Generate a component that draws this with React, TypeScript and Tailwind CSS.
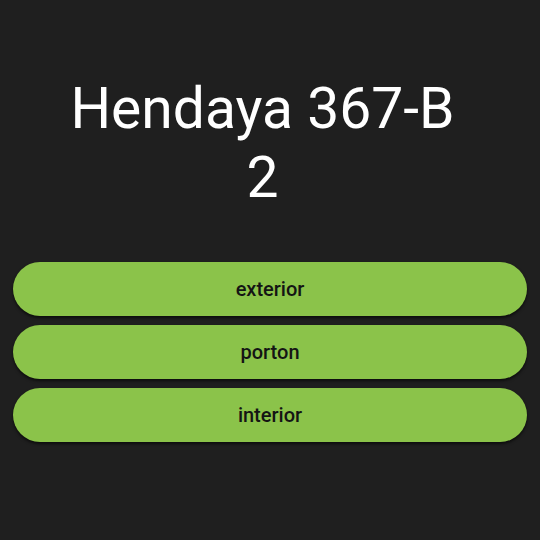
export default function App() {
  const options = ['exterior', 'porton', 'interior']

  return (
    <div className="h-[540px] w-[540px] bg-[#1f1f1f] font-['Roboto',sans-serif]">
      <div className="pr-[15px] pt-[74px]">
        <h1 className="mx-auto w-[400px] text-center text-[57px] font-normal leading-[69px] text-white">
          Hendaya 367-B 2
        </h1>
      </div>

      <div className="mt-[50px] flex flex-col gap-[9px] px-[13px]">
        {options.map((o) => (
          <button
            key={o}
            type="button"
            className="h-[54px] w-full rounded-full bg-[#8bc34a] text-[20px] font-medium text-[#141414] shadow-[0_2px_3px_rgba(0,0,0,0.6)]"
          >
            {o}
          </button>
        ))}
      </div>
    </div>
  )
}
